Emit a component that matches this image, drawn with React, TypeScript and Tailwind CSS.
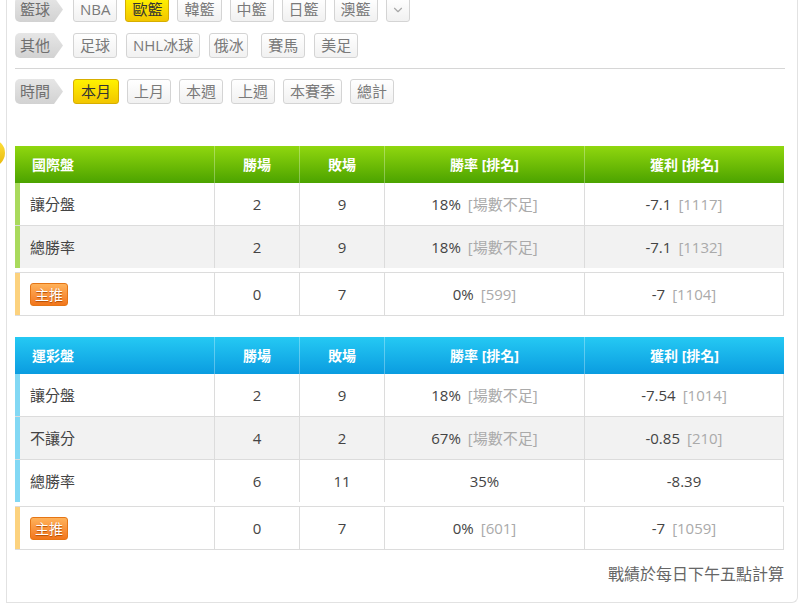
import React from "react";
import { ChevronDown } from "lucide-react";

type Row = {
  name: string;
  win: string;
  lose: string;
  rate: string;
  rateRank?: string;
  profit: string;
  profitRank?: string;
};

const intlRows: Row[] = [
  { name: "讓分盤", win: "2", lose: "9", rate: "18%", rateRank: "[場數不足]", profit: "-7.1", profitRank: "[1117]" },
  { name: "總勝率", win: "2", lose: "9", rate: "18%", rateRank: "[場數不足]", profit: "-7.1", profitRank: "[1132]" },
];
const intlPick: Row = { name: "主推", win: "0", lose: "7", rate: "0%", rateRank: "[599]", profit: "-7", profitRank: "[1104]" };

const lotteryRows: Row[] = [
  { name: "讓分盤", win: "2", lose: "9", rate: "18%", rateRank: "[場數不足]", profit: "-7.54", profitRank: "[1014]" },
  { name: "不讓分", win: "4", lose: "2", rate: "67%", rateRank: "[場數不足]", profit: "-0.85", profitRank: "[210]" },
  { name: "總勝率", win: "6", lose: "11", rate: "35%", profit: "-8.39" },
];
const lotteryPick: Row = { name: "主推", win: "0", lose: "7", rate: "0%", rateRank: "[601]", profit: "-7", profitRank: "[1059]" };

// 15..784: lines at 214, 299, 384, 584
const cols = "grid grid-cols-[199px_85px_85px_200px_200px]";

const Tag: React.FC<{ label: string }> = ({ label }) => (
  <div className="flex h-[25px] w-[48px] items-center rounded-l-[5px] bg-gradient-to-b from-[#e6e6e6] to-[#d2d2d2] pl-[5px] text-[15px] text-[#6f6f6f] [clip-path:polygon(0_0,calc(100%_-_9px)_0,100%_50%,calc(100%_-_9px)_100%,0_100%)]">
    {label}
  </div>
);

const Btn: React.FC<{ label: string; active?: boolean; w?: string }> = ({ label, active, w }) => (
  <div
    className={
      "flex h-[25px] items-center justify-center rounded-[3px] border text-[15px] " +
      (w ? w + " " : "px-[6px] ") +
      (active
        ? "border-[#d7ae00] bg-gradient-to-b from-[#fff200] to-[#f2c600] text-[#333]"
        : "border-[#d4d4d4] bg-gradient-to-b from-white to-[#f1f1f1] text-[#7a7a7a]")
    }
  >
    {label}
  </div>
);

const Pick: React.FC = () => (
  <span className="flex h-[23px] w-[38px] items-center justify-center rounded-[3px] border border-[#e57515] bg-gradient-to-b from-[#ffb25a] to-[#f2761a] text-[14px] text-white [text-shadow:0_1px_1px_#b04a00]">
    主推
  </span>
);

const Cells: React.FC<{ r: Row; stripe: string; pick?: boolean; gray?: boolean }> = ({ r, stripe, pick, gray }) => (
  <div className={cols + " h-[42px] text-[15px] text-[#444] " + (gray ? "bg-[#f2f2f2]" : "bg-white")}>
    <div className={"flex items-center border-l-[5px] pl-[10px] " + stripe}>{pick ? <Pick /> : r.name}</div>
    <div className="flex items-center justify-center border-l border-[#dcdcdc]">{r.win}</div>
    <div className="flex items-center justify-center border-l border-[#dcdcdc]">{r.lose}</div>
    <div className="flex items-center justify-center border-l border-[#dcdcdc]">
      {r.rate}
      {r.rateRank && <span className="ml-[7px] text-[#aaa]">{r.rateRank}</span>}
    </div>
    <div className="flex items-center justify-center border-x border-[#dcdcdc]">
      {r.profit}
      {r.profitRank && <span className="ml-[7px] text-[#aaa]">{r.profitRank}</span>}
    </div>
  </div>
);

const StatTable: React.FC<{ title: string; head: string; stripe: string; rows: Row[]; pick: Row }> = ({
  title,
  head,
  stripe,
  rows,
  pick,
}) => (
  <div className="flex flex-col">
    <div className={cols + " h-[37px] text-[14px] font-bold text-white " + head}>
      <div className="flex items-center pl-[17px]">{title}</div>
      {["勝場", "敗場", "勝率 [排名]", "獲利 [排名]"].map((h) => (
        <div key={h} className="flex items-center justify-center border-l border-white/30">
          {h}
        </div>
      ))}
    </div>
    <div className="flex flex-col">
      {rows.map((r, i) => (
        <div key={r.name} className={i > 0 ? "border-t border-[#dcdcdc]" : ""}>
          <Cells r={r} stripe={stripe} gray={i % 2 === 1} />
        </div>
      ))}
    </div>
    <div className="mt-[4px] border-y border-[#dcdcdc]">
      <Cells r={pick} stripe="border-l-[#fcd27e]" pick />
    </div>
  </div>
);

export default function App() {
  return (
    <div className="relative h-[606px] w-[804px] overflow-hidden bg-white font-['Open_Sans','Noto_Sans_CJK_TC',sans-serif]">
      <div className="absolute left-[-23px] top-[139px] h-[28px] w-[28px] rounded-full bg-gradient-to-b from-[#ffe23a] to-[#e7b800]" />
      <div className="ml-[6px] flex h-[603px] w-[792px] flex-col rounded-br-[6px] border-b border-l border-r border-[#e2e2e2] pl-[8px] pr-[12px]">
        <div className="-mt-[3px] flex items-center">
          <Tag label="籃球" />
          <div className="ml-[10px] flex gap-[8px]">
            <Btn label="NBA" />
            <Btn label="歐籃" active />
            <Btn label="韓籃" />
            <Btn label="中籃" />
            <Btn label="日籃" />
            <Btn label="澳籃" />
            <div className="flex h-[25px] w-[24px] items-center justify-center rounded-[3px] border border-[#d4d4d4] bg-gradient-to-b from-white to-[#f1f1f1]">
              <ChevronDown size={14} color="#a8a8a8" />
            </div>
          </div>
        </div>
        <div className="mt-[11px] flex items-center">
          <Tag label="其他" />
          <div className="ml-[10px] flex gap-[9px]">
            <Btn label="足球" />
            <Btn label="NHL冰球" />
            <Btn label="俄冰" w="w-[39px]" />
            <div className="ml-[4px] flex gap-[9px]">
              <Btn label="賽馬" />
              <Btn label="美足" />
            </div>
          </div>
        </div>
        <div className="mt-[10px] h-px w-[770px] bg-[#d6d6d6]" />
        <div className="mt-[10px] flex items-center">
          <Tag label="時間" />
          <div className="ml-[10px] flex gap-[8px]">
            <Btn label="本月" active w="w-[46px]" />
            <Btn label="上月" />
            <Btn label="本週" />
            <Btn label="上週" />
            <Btn label="本賽季" />
            <Btn label="總計" />
          </div>
        </div>
        <div className="mt-[42px] w-[769px]">
          <StatTable
            title="國際盤"
            head="bg-gradient-to-b from-[#90d70f] to-[#4ba300]"
            stripe="border-l-[#a9da5c]"
            rows={intlRows}
            pick={intlPick}
          />
        </div>
        <div className="mt-[21px] w-[769px]">
          <StatTable
            title="運彩盤"
            head="bg-gradient-to-b from-[#25c9f3] to-[#0a9ce0]"
            stripe="border-l-[#82d8f4]"
            rows={lotteryRows}
            pick={lotteryPick}
          />
        </div>
        <div className="mt-[12px] w-[769px] text-right text-[16px] text-[#666]">戰績於每日下午五點計算</div>
      </div>
    </div>
  );
}
